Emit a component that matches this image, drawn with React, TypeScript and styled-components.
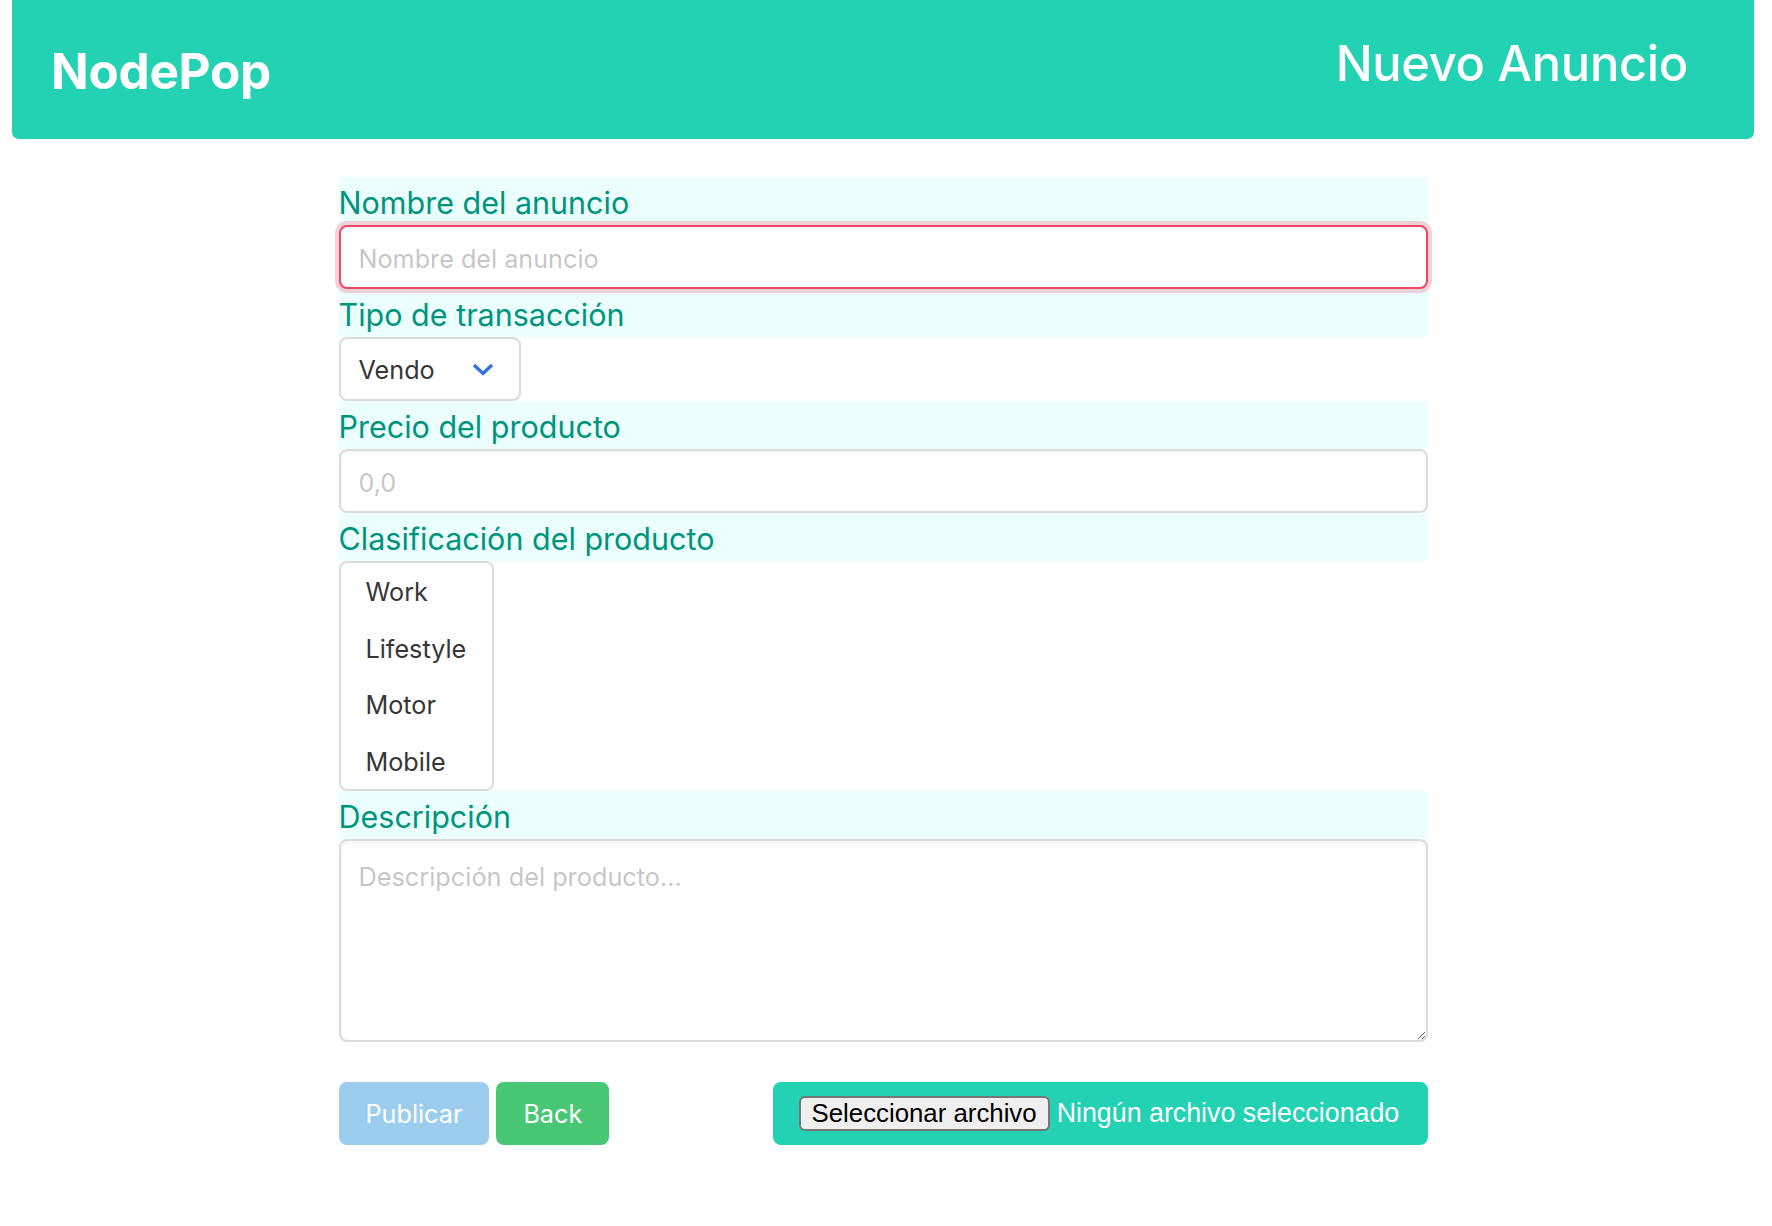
import React from 'react';
import styled, { createGlobalStyle } from 'styled-components';

const GlobalStyle = createGlobalStyle`
  html, body {
    margin: 0;
    padding: 0;
    background: #ffffff;
  }
  body {
    font-family: Inter, "Noto Sans", sans-serif;
    color: #363636;
  }
  * {
    box-sizing: border-box;
  }
`;

const categories = ['Work', 'Lifestyle', 'Motor', 'Mobile'];

const Page = styled.div`
  margin: 0 18px 0 12px;
  padding-bottom: 60px;
`;

const Header = styled.header`
  height: 139px;
  background: #23d1b3;
  border-radius: 0 0 7px 7px;
  display: flex;
  justify-content: space-between;
  align-items: flex-start;
  padding: 0 66px 0 39px;
  color: #ffffff;
`;

const HeaderTitle = styled.h1<{ $top: number; $size: number; $weight: number }>`
  margin: ${(p) => p.$top}px 0 0;
  font-size: ${(p) => p.$size}px;
  font-weight: ${(p) => p.$weight};
  line-height: 1;
  letter-spacing: -0.3px;
`;

const Form = styled.form`
  width: 1089px;
  margin: 38px auto 0;
  display: flex;
  flex-direction: column;
`;

const Label = styled.label`
  display: block;
  height: 48px;
  padding-top: 2px;
  background: #ebfffc;
  color: #00947e;
  font-size: 30.5px;
  line-height: 48px;
`;

const TextInput = styled.input<{ $danger?: boolean }>`
  position: relative;
  z-index: 1;
  display: block;
  width: 100%;
  height: 64px;
  padding: 3px 18px 0;
  border: 2px solid ${(p) => (p.$danger ? '#f14668' : '#dbdbdb')};
  border-radius: 8px;
  background: #ffffff;
  font-family: Inter, sans-serif;
  font-size: 25.2px;
  color: #363636;
  outline: none;
  box-shadow: ${(p) =>
    p.$danger ? '0 0 0 4px rgba(241, 70, 104, 0.25)' : 'inset 0 2px 4px rgba(10, 10, 10, 0.05)'};

  &::placeholder {
    color: rgba(54, 54, 54, 0.3);
  }
`;

const SelectWrap = styled.div`
  position: relative;
  width: 182px;
  height: 64px;
`;

const Select = styled.select`
  appearance: none;
  width: 100%;
  height: 100%;
  padding: 2px 60px 0 18px;
  border: 2px solid #dbdbdb;
  border-radius: 8px;
  background: #ffffff;
  font-family: Inter, sans-serif;
  font-size: 25.2px;
  color: #363636;
  outline: none;
`;

const Chevron = styled.svg`
  position: absolute;
  right: 27px;
  top: 26px;
  pointer-events: none;
`;

const OptionList = styled.ul`
  list-style: none;
  margin: 0;
  padding: 1px 0 0;
  width: 155px;
  height: 230px;
  border: 2px solid #dbdbdb;
  border-radius: 8px;
  background: #ffffff;
`;

const OptionItem = styled.li`
  height: 56.5px;
  line-height: 56.5px;
  padding-left: 25px;
  font-size: 25.2px;
  color: #363636;
`;

const TextArea = styled.textarea`
  display: block;
  width: 100%;
  height: 203px;
  padding: 17px 18px;
  border: 2px solid #dbdbdb;
  border-radius: 8px;
  font-family: Inter, sans-serif;
  font-size: 25.3px;
  line-height: 1.5;
  color: #363636;
  resize: vertical;
  outline: none;
  box-shadow: inset 0 2px 4px rgba(10, 10, 10, 0.05);

  &::placeholder {
    color: rgba(54, 54, 54, 0.3);
  }
`;

const Actions = styled.div`
  display: flex;
  justify-content: space-between;
  align-items: center;
  margin-top: 40px;
`;

const ButtonGroup = styled.div`
  display: flex;
  gap: 7px;
`;

const Button = styled.button<{ $bg: string }>`
  height: 63px;
  padding: 0 27px;
  border: none;
  border-radius: 8px;
  background: ${(p) => p.$bg};
  color: #ffffff;
  font-family: Inter, sans-serif;
  font-size: 25.2px;
  cursor: pointer;
`;

const FileBox = styled.div`
  display: flex;
  align-items: center;
  width: 655px;
  height: 63px;
  padding-left: 26px;
  border-radius: 8px;
  background: #23d1b3;
`;

const FileButton = styled.button`
  height: 35px;
  padding: 0 11px;
  border: 2px solid #767676;
  border-radius: 6px;
  background: #efefef;
  color: #000000;
  font-family: "Liberation Sans", Arial, sans-serif;
  font-size: 25.8px;
  line-height: 1;
`;

const FileName = styled.span`
  margin-left: 7px;
  color: #ffffff;
  font-family: "Liberation Sans", Arial, sans-serif;
  font-size: 26.8px;
`;

const App: React.FC = () => {
  return (
    <Page>
      <GlobalStyle />
      <Header>
        <HeaderTitle $top={47} $size={49.5} $weight={700}>
          NodePop
        </HeaderTitle>
        <HeaderTitle $top={40} $size={48.8} $weight={500}>
          Nuevo Anuncio
        </HeaderTitle>
      </Header>

      <Form onSubmit={(e) => e.preventDefault()}>
        <Label htmlFor="name">Nombre del anuncio</Label>
        <TextInput id="name" $danger placeholder="Nombre del anuncio" />

        <Label htmlFor="sale">Tipo de transacción</Label>
        <SelectWrap>
          <Select id="sale" defaultValue="sell">
            <option value="sell">Vendo</option>
            <option value="buy">Compro</option>
          </Select>
          <Chevron width="22" height="13" viewBox="0 0 22 13">
            <path d="M2 2 L11 10.5 L20 2" fill="none" stroke="#3273dc" strokeWidth="3.4" />
          </Chevron>
        </SelectWrap>

        <Label htmlFor="price">Precio del producto</Label>
        <TextInput id="price" placeholder="0,0" />

        <Label>Clasificación del producto</Label>
        <OptionList>
          {categories.map((c) => (
            <OptionItem key={c}>{c}</OptionItem>
          ))}
        </OptionList>

        <Label htmlFor="desc">Descripción</Label>
        <TextArea id="desc" placeholder="Descripción del producto..." />

        <Actions>
          <ButtonGroup>
            <Button type="submit" $bg="#9dcdee" disabled>
              Publicar
            </Button>
            <Button type="button" $bg="#48c774">
              Back
            </Button>
          </ButtonGroup>
          <FileBox>
            <FileButton type="button">Seleccionar archivo</FileButton>
            <FileName>Ningún archivo seleccionado</FileName>
          </FileBox>
        </Actions>
      </Form>
    </Page>
  );
};

export default App;
